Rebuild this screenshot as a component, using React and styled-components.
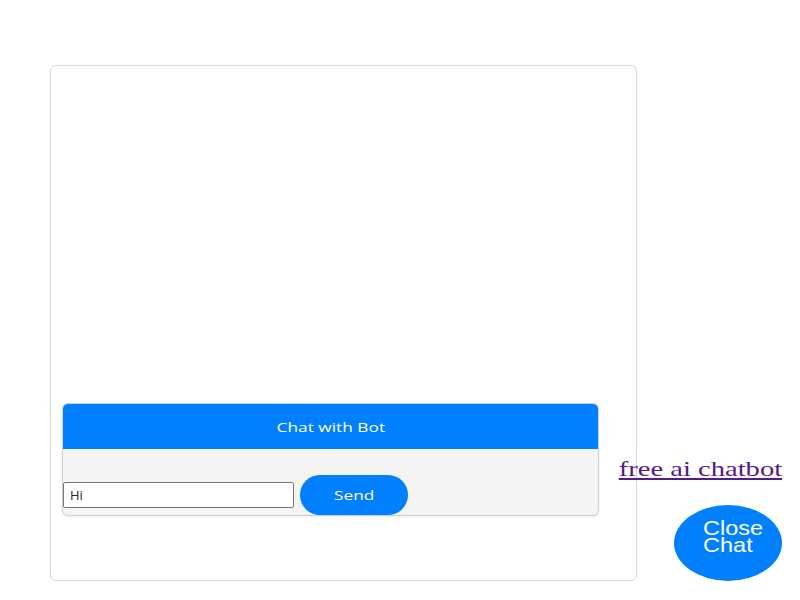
import React from 'react'
import styled, { createGlobalStyle } from 'styled-components'

const GlobalStyle = createGlobalStyle`
  body {
    margin: 0;
    background: #fff;
    font-family: "Liberation Serif", serif;
  }
`

const Page = styled.div`
  display: flex;
  align-items: flex-end;
  padding: 65px 0 19px 50px;
  height: 600px;
  box-sizing: border-box;
`

const Frame = styled.div`
  width: 587px;
  height: 516px;
  box-sizing: border-box;
  border: 1px solid #d6d6d6;
  border-radius: 6px;
  display: flex;
  flex-direction: column;
  justify-content: flex-end;
  padding: 0 37px 64px 11px;
`

const Widget = styled.div`
  border: 1px solid #cfcfcf;
  border-radius: 6px;
  overflow: hidden;
  background: #f4f4f4;
  box-shadow: 0 1px 3px rgba(0, 0, 0, 0.08);
`

// the shot is wider than tall, so labels get stretched
const Wide = styled.span`
  display: inline-block;
  transform: scaleX(${(p) => p.$x || 1.33});
  transform-origin: ${(p) => p.$origin || 'center'};
`

const Header = styled.div`
  height: 45px;
  background: #0080ff;
  color: #fff;
  display: flex;
  align-items: center;
  justify-content: center;
  font-family: "Open Sans", sans-serif;
  font-size: 13px;
`

const Body = styled.div`
  padding-top: 25px;
`

const InputRow = styled.div`
  display: flex;
  align-items: center;
  gap: 6px;
  height: 41px;
`

const TextInput = styled.input`
  width: 231px;
  height: 26px;
  box-sizing: border-box;
  border: 1px solid #777;
  border-radius: 2px;
  padding: 0 6px;
  font-family: "Open Sans", sans-serif;
  font-size: 13px;
  color: #222;
  background: #fff;
`

const SendButton = styled.button`
  width: 108px;
  height: 40px;
  border: none;
  border-radius: 20px;
  background: #0080ff;
  color: #fff;
  font-family: "Open Sans", sans-serif;
  font-size: 13px;
`

const Side = styled.div`
  width: 164px;
  display: flex;
  flex-direction: column;
  align-items: flex-end;
  margin-left: -19px;
`

const Link = styled.a`
  display: inline-block;
  color: #551a8b;
  font-family: "Liberation Serif", serif;
  font-size: 21px;
  margin-bottom: 23px;
  transform: scaleX(1.36);
  transform-origin: right center;
`

const CloseButton = styled.button`
  width: 108px;
  height: 76px;
  border: none;
  border-radius: 50%;
  background: #0080ff;
  color: #fff;
  font-family: "Liberation Sans", sans-serif;
  font-size: 21px;
  line-height: 17px;
  display: flex;
  align-items: flex-start;
  justify-content: flex-start;
  padding: 14px 0 0 29px;
  text-align: left;
`

export default function App() {
  return (
    <>
      <GlobalStyle />
      <Page>
        <Frame>
          <Widget>
            <Header>
              <Wide>Chat with Bot</Wide>
            </Header>
            <Body>
              <InputRow>
                <TextInput defaultValue="Hi" />
                <SendButton>
                  <Wide>Send</Wide>
                </SendButton>
              </InputRow>
            </Body>
          </Widget>
        </Frame>
        <Side>
          <Link href="#">free ai chatbot</Link>
          <CloseButton>
            <Wide $x={1.12} $origin="left center">
              Close
              <br />
              Chat
            </Wide>
          </CloseButton>
        </Side>
      </Page>
    </>
  )
}
